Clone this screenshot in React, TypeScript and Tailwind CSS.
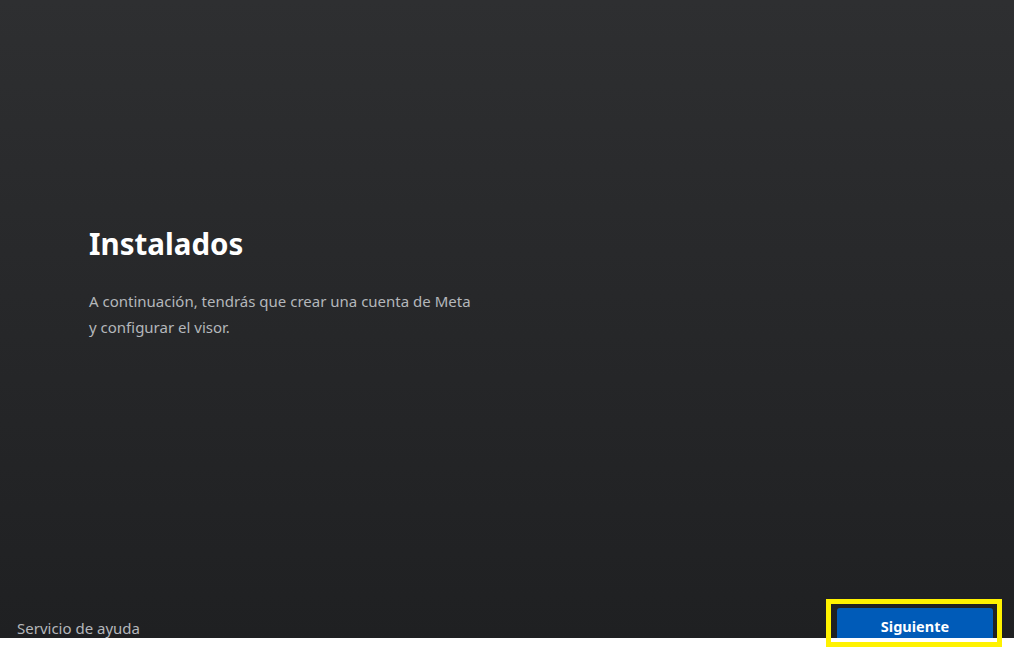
import React from "react";

export default function App() {
  return (
    <div className="relative w-[1014px] h-[653px] bg-white overflow-hidden" style={{ fontFamily: '"Noto Sans", "Open Sans", sans-serif' }}>
      <div className="flex flex-col h-[638px] overflow-hidden bg-gradient-to-b from-[#2e2f31] to-[#1f2022]">
        <div className="pt-[225px] pl-[89px]">
          <h1 className="text-[29.5px] leading-[38px] font-bold text-white">Instalados</h1>
          <p className="mt-[25px] text-[15px] leading-[26px] text-[#b4b7bb] w-[390px]">
            A continuación, tendrás que crear una cuenta de Meta y configurar el visor.
          </p>
        </div>
        <div className="mt-auto mb-[-10px] flex items-center justify-between pl-[17px] pr-[21px]">
          <span className="text-[15px] text-[#b4b7bb]">Servicio de ayuda</span>
          <button className="w-[156px] h-[40px] pb-[3px] rounded-[3px] bg-[#005bb8] text-white text-[14.5px] font-bold">
            Siguiente
          </button>
        </div>
      </div>
      <div className="absolute left-[826px] top-[599px] w-[176px] h-[48px] border-[5px] border-[#fff200]" />
    </div>
  );
}
